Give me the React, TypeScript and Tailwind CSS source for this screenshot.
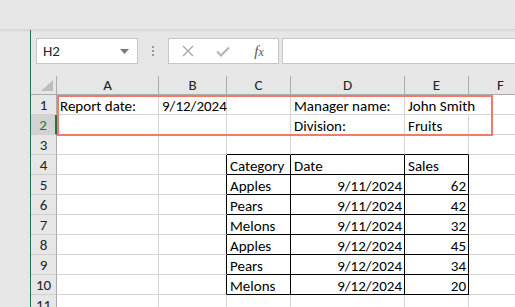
import React from 'react';

type Col = { key: string; w: string };
const cols: Col[] = [
  { key: 'A', w: 'w-[102px]' },
  { key: 'B', w: 'w-[68px]' },
  { key: 'C', w: 'w-[64px]' },
  { key: 'D', w: 'w-[114px]' },
  { key: 'E', w: 'w-[64px]' },
  { key: 'F', w: 'w-[64px]' },
  { key: 'G', w: 'w-[64px]' },
];

type Cell = { t: string; align?: 'l' | 'r' };
const data: Record<number, Record<string, Cell>> = {
  1: { A: { t: 'Report date:' }, B: { t: '9/12/2024' }, D: { t: 'Manager name:' }, E: { t: 'John Smith' } },
  2: { D: { t: 'Division:' }, E: { t: 'Fruits' } },
  4: { C: { t: 'Category' }, D: { t: 'Date' }, E: { t: 'Sales' } },
  5: { C: { t: 'Apples' }, D: { t: '9/11/2024', align: 'r' }, E: { t: '62', align: 'r' } },
  6: { C: { t: 'Pears' }, D: { t: '9/11/2024', align: 'r' }, E: { t: '42', align: 'r' } },
  7: { C: { t: 'Melons' }, D: { t: '9/11/2024', align: 'r' }, E: { t: '32', align: 'r' } },
  8: { C: { t: 'Apples' }, D: { t: '9/12/2024', align: 'r' }, E: { t: '45', align: 'r' } },
  9: { C: { t: 'Pears' }, D: { t: '9/12/2024', align: 'r' }, E: { t: '34', align: 'r' } },
  10: { C: { t: 'Melons' }, D: { t: '9/12/2024', align: 'r' }, E: { t: '20', align: 'r' } },
};

const rows = [1, 2, 3, 4, 5, 6, 7, 8, 9, 10, 11];
const tableCols = ['C', 'D', 'E'];

function blackRight(r: number, c: string) {
  if (r < 4 || r > 10) return false;
  return c === 'B' || tableCols.includes(c);
}
function blackBottom(r: number, c: string) {
  if (r < 3 || r > 10) return false;
  return tableCols.includes(c);
}

export default function App() {
  return (
    <div
      className="relative w-[515px] h-[307px] overflow-hidden bg-[#e6e6e6] text-[15px] leading-[16px] text-black"
      style={{ fontFamily: "Carlito, 'Liberation Sans', Arial, sans-serif" }}
    >
      {/* top band */}
      <div className="h-[30px] border-b border-b-[#d8d8d8] shadow-[0_1px_2px_rgba(0,0,0,0.08)]" />
      <div className="flex">
        <div className="w-[30px] shrink-0" />
        <div className="flex-1 min-w-0 overflow-hidden border-l border-l-[#217346] h-[277px]">
          {/* formula bar */}
          <div className="h-[46px] flex items-start pt-[8px] pl-[5px]">
            <div className="w-[102px] shrink-0 h-[26px] bg-white border border-[#c6c6c6] flex items-center pl-[6px] pr-[8px] text-[15px] text-[#262626]">
              <span className="flex-1">H2</span>
              <svg width="9" height="5" viewBox="0 0 9 5">
                <path d="M0 0 L9 0 L4.5 5 Z" fill="#7a7a7a" />
              </svg>
            </div>
            <div className="w-[30px] shrink-0 h-[26px] flex flex-col items-center justify-center gap-[2px]">
              <div className="w-[2px] h-[2px] bg-[#9a9a9a]" />
              <div className="w-[2px] h-[2px] bg-[#9a9a9a]" />
              <div className="w-[2px] h-[2px] bg-[#9a9a9a]" />
            </div>
            <div className="w-[111px] shrink-0 h-[26px] bg-white border border-[#c6c6c6] flex items-center">
              <div className="w-[36px] flex justify-center pl-[2px]">
                <svg width="12" height="12" viewBox="0 0 12 12">
                  <path d="M1 1 L11 11 M11 1 L1 11" stroke="#a6a6a6" strokeWidth="1.3" />
                </svg>
              </div>
              <div className="w-[36px] flex justify-center">
                <svg width="14" height="11" viewBox="0 0 14 11">
                  <path d="M1 5.5 L5 9.5 L13 1.5" stroke="#b3b3b3" strokeWidth="2" fill="none" />
                </svg>
              </div>
              <div
                className="w-[36px] flex justify-center items-baseline text-[15px] italic text-[#5a5a5a]"
                style={{ fontFamily: "'Liberation Serif', 'Times New Roman', serif" }}
              >
                <span>f</span>
                <span className="text-[12px]">x</span>
              </div>
            </div>
            <div className="ml-[3px] flex-1 h-[26px] bg-white border border-[#c6c6c6] border-r-0" />
          </div>

          {/* column header row */}
          <div className="flex h-[19px] bg-[#e6e6e6] border-b border-b-[#ababab]">
            <div className="w-[26px] shrink-0 border-r border-r-[#ababab] flex items-end justify-end pr-[3px] pb-[3px]">
              <svg width="12" height="11" viewBox="0 0 12 11">
                <path d="M12 0 L12 11 L0 11 Z" fill="#bdbdbd" />
              </svg>
            </div>
            {cols.map((c) => (
              <div
                key={c.key}
                className={`${c.w} shrink-0 border-r border-r-[#ababab] flex items-center justify-center text-[15px] text-[#222]`}
              >
                {c.key}
              </div>
            ))}
          </div>

          {/* rows */}
          {rows.map((r) => {
            const sel = r === 2;
            return (
              <div key={r} className="flex h-[20px]">
                <div
                  className={`w-[26px] shrink-0 border-b border-b-[#d0d0d0] flex items-end justify-center pb-[1px] text-[15px] ${
                    sel
                      ? 'bg-[#d2d2d2] border-r-2 border-r-[#217346] text-[#217346]'
                      : 'bg-[#e6e6e6] border-r border-r-[#ababab] text-[#222]'
                  }`}
                >
                  {r}
                </div>
                {cols.map((c) => {
                  const cell = data[r]?.[c.key];
                  const br = blackRight(r, c.key);
                  const bb = blackBottom(r, c.key);
                  const hideR = r === 1 && c.key === 'E';
                  return (
                    <div
                      key={c.key}
                      className={`${c.w} shrink-0 bg-white border-r border-b flex items-end overflow-visible whitespace-nowrap ${
                        hideR ? 'border-r-white' : br ? 'border-r-black' : 'border-r-[#d4d4d4]'
                      } ${bb ? 'border-b-black' : 'border-b-[#d4d4d4]'} ${
                        cell?.align === 'r' ? 'justify-end pr-[2px]' : 'justify-start pl-[3px]'
                      }`}
                    >
                      {cell ? <span className="relative z-10">{cell.t}</span> : null}
                    </div>
                  );
                })}
              </div>
            );
          })}
        </div>
      </div>

      {/* annotation rectangle */}
      <div className="absolute left-[57px] top-[95px] w-[436px] h-[41px] border-2 border-[#f07b6c] pointer-events-none" />
    </div>
  );
}
